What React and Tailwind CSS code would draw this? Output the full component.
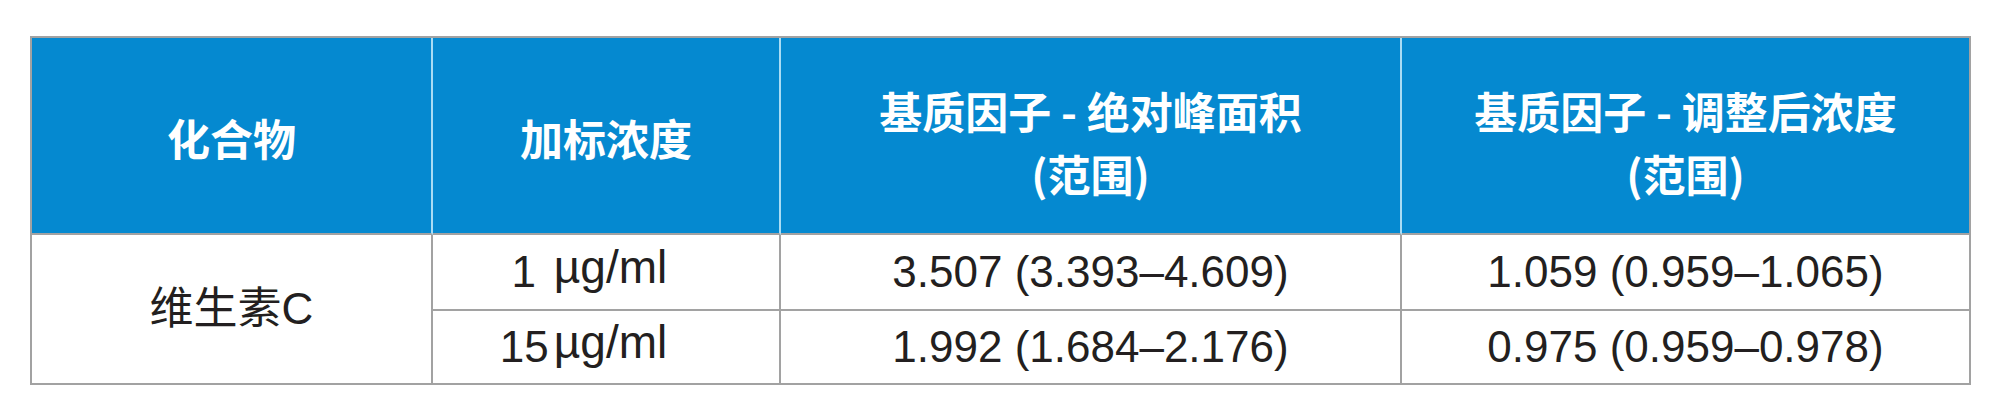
import React from 'react';

const rows = [
    { dose: '1', af: '3.507 (3.393–4.609)', conc: '1.059 (0.959–1.065)' },
    { dose: '15', af: '1.992 (1.684–2.176)', conc: '0.975 (0.959–0.978)' },
];

const head = "bg-[#0589d0] border-b-2 border-b-[#a2a2a2] flex items-center justify-center text-white font-bold text-[43px] leading-[63px] font-['Noto_Sans_CJK_SC','Liberation_Sans',sans-serif]";
const body = "border-[#a2a2a2] flex items-center justify-center text-[44px] font-['Liberation_Sans','Noto_Sans_CJK_SC',sans-serif]";

const App = () => {
    return (
        <div className="w-[2000px] h-[419px] bg-white pt-[36px] pl-[30px]">
            <div className="w-[1941px] border-2 border-[#a2a2a2]">
                <div className="grid grid-cols-[401px_348px_621px_567px] grid-rows-[197px_76px_72px] text-[#231f20]">
                    {/* Header */}
                    <div className={`${head} border-r-2 border-r-[#a9dcf4] pt-[3px]`}>化合物</div>
                    <div className={`${head} border-r-2 border-r-[#a9dcf4] pt-[3px]`}>加标浓度</div>
                    <div className={`${head} border-r-2 border-r-[#a9dcf4] flex-col pt-[12px]`}>
                        <span>基质因子 - 绝对峰面积</span>
                        <span>(范围)</span>
                    </div>
                    <div className={`${head} flex-col pt-[12px]`}>
                        <span>基质因子 - 调整后浓度</span>
                        <span>(范围)</span>
                    </div>

                    {/* Compound cell spans both data rows */}
                    <div className={`${body} row-span-2 border-r-2`}>维生素C</div>

                    {rows.map((r, i) => {
                        const rowBorder = i === rows.length - 1 ? '' : 'border-b-2';
                        return (
                            <React.Fragment key={r.dose}>
                                <div className={`${body} ${rowBorder} border-r-2 pr-[45px] leading-none`}>
                                    <span className="inline-block w-[48px] text-center">{r.dose}</span>
                                    <span className="ml-[6px] text-[46px] relative -top-[5px]">µg/ml</span>
                                </div>
                                <div className={`${body} ${rowBorder} border-r-2`}>{r.af}</div>
                                <div className={`${body} ${rowBorder}`}>{r.conc}</div>
                            </React.Fragment>
                        );
                    })}
                </div>
            </div>
        </div>
    );
};

export default App;
